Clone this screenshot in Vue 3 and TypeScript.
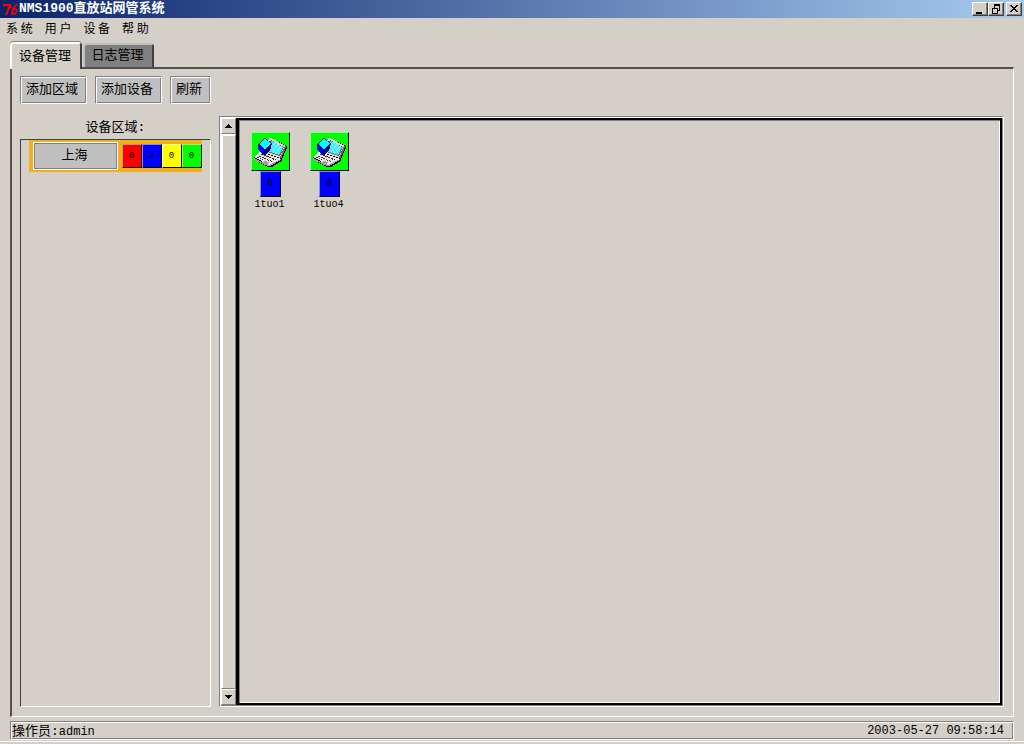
<script setup lang="ts">
import { ref } from 'vue'

interface Count { color: string; value: number }
interface Device { name: string; alarms: number }

const menus: string[] = ['系 统', '用 户', '设 备', '帮 助']
const tabs: string[] = ['设备管理', '日志管理']
const actions: string[] = ['添加区域', '添加设备', '刷新']
const activeTab = ref(0)
const counts: Count[] = [
  { color: 'red', value: 0 },
  { color: 'blue', value: 2 },
  { color: 'yellow', value: 0 },
  { color: 'green', value: 0 },
]
const devices: Device[] = [
  { name: '1tuo1', alarms: 0 },
  { name: '1tuo4', alarms: 0 },
]
</script>

<template>
  <div class="window">
    <header class="titlebar">
      <svg class="logo" width="16" height="16" viewBox="0 0 16 16" fill="none" stroke="#f00" stroke-width="2">
        <path d="M0 6V4H7L3 14" />
        <path d="M14 3L10 8L9 13H12L14 10L13 8H10M6 7L9 6" stroke-width="1.6" />
      </svg>
      <h1>NMS1900直放站网管系统</h1>
      <div class="controls">
        <button type="button" aria-label="最小化">
          <svg width="12" height="10" shape-rendering="crispEdges"><path d="M2 8h6v2h-6z" /></svg>
        </button>
        <button type="button" aria-label="还原">
          <svg width="12" height="10" shape-rendering="crispEdges" fill="none" stroke="#000">
            <path d="M4 .5h6M4 1.5h6M4.5 1v3M9.5 1v5.5H7M2 4h6M2.5 4v5.5h5V4M2 4.5h6" />
          </svg>
        </button>
        <button type="button" class="close" aria-label="关闭">
          <svg width="12" height="10" shape-rendering="crispEdges"><path d="M2 1h2v1h1v1h2V2h1V1h2v1H9v1H8v1H7v1h1v1h1v1h1v1H8V7H7V6H5v1H4v1H2V7h1V6h1V5h1V4H4V3H3V2H2z" /></svg>
        </button>
      </div>
    </header>

    <nav class="menu">
      <button v-for="m in menus" :key="m" type="button">{{ m }}</button>
    </nav>

    <div class="tabs" role="tablist">
      <button
        v-for="(t, i) in tabs"
        :key="t"
        type="button"
        role="tab"
        :aria-selected="activeTab === i"
        :class="{ active: activeTab === i }"
        @click="activeTab = i"
      >{{ t }}</button>
    </div>

    <main class="panel">
      <section class="side">
        <div class="toolbar">
          <button v-for="a in actions" :key="a" type="button">{{ a }}</button>
        </div>
        <h2>设备区域:</h2>
        <div class="regions">
          <div class="region">
            <button type="button" class="region-name">上海</button>
            <div class="counts">
              <button v-for="c in counts" :key="c.color" type="button" :class="['tile', c.color]">{{ c.value }}</button>
            </div>
          </div>
        </div>
      </section>

      <section class="view">
        <div class="scrollbar">
          <button type="button" aria-label="向上滚动">
            <svg width="7" height="4" shape-rendering="crispEdges"><path d="M3 0h1v1h1v1h1v1h1v1H0V3h1V2h1V1h1z" /></svg>
          </button>
          <div class="thumb"></div>
          <button type="button" aria-label="向下滚动">
            <svg width="7" height="4" shape-rendering="crispEdges"><path d="M0 0h7v1H6v1H5v1H4v1H3V3H2V2H1V1H0z" /></svg>
          </button>
        </div>
        <div class="canvas">
          <div v-for="d in devices" :key="d.name" class="device">
            <button type="button" class="tile green pic" :aria-label="d.name">
              <svg width="37" height="37" viewBox="1 1 37 37" shape-rendering="crispEdges">
                <path d="M18 6H20L36 14V16L31 27V29L21 35H17L3 28V25L9 19L15 21Z" fill="#000" />
                <path d="M18 6H20L35 14L30 26L14 21Z" fill="#d8d8d8" />
                <path d="M34 14L35 15L30 27L29 25Z" fill="#707070" />
                <path d="M20 8L33 15L29 24L16 20Z" fill="#707070" />
                <path d="M21 9L32 15L28 23L17 19Z" fill="#40f0ff" />
                <path d="M22 18L28 12M24 21L31 14M20 15L25 10" stroke="#d0e8e8" stroke-dasharray="2 1" />
                <path d="M3 25L9 20L30 27L18 33Z" fill="#e8e8e8" />
                <path d="M3 26L18 33L30 27V28L19 34H17L3 28Z" fill="#a0a0a0" />
                <path d="M10 22L25 28M8 24L22 30M6 25L12 28" stroke="#303030" stroke-dasharray="2 1" />
                <path d="M14 29L18 30L16 32L12 30Z" fill="#a0a0a0" />
                <path d="M7 12L14 6L21 11L19 19L14 23L7 18Z" fill="#000080" />
                <path d="M7 12L13 16V23L7 18Z" fill="#00f" />
                <path d="M8 12L14 7L20 11L14 17Z" fill="#0ff" />
              </svg>
            </button>
            <button type="button" class="tile blue alarm">{{ d.alarms }}</button>
            <span class="device-name">{{ d.name }}</span>
          </div>
        </div>
      </section>
    </main>

    <footer class="status">
      <span class="operator">操作员:<b>admin</b></span>
      <time datetime="2003-05-27T09:58:14">2003-05-27 09:58:14</time>
    </footer>
  </div>
</template>

<style>
body { background: #d4d0c8; }
</style>

<style scoped>
.window {
  display: flex;
  flex-direction: column;
  height: 100vh;
  box-sizing: border-box;
  padding-bottom: 2px;
  background: #d4d0c8;
  color: #000;
  font: 13px/16px "Liberation Mono", "Noto Sans CJK SC", monospace;
}
.window::after {
  content: "";
  flex: none;
  height: 1px;
  margin-top: 1px;
  background: #fff;
}
button {
  box-sizing: border-box;
  margin: 0;
  padding: 0;
  border: 0;
  background: none;
  color: inherit;
  font: inherit;
  white-space: nowrap;
}
h1, h2 { margin: 0; font-size: 13px; }
svg { display: block; flex: none; }

.titlebar {
  display: flex;
  align-items: center;
  flex: none;
  height: 18px;
  padding: 0 2px 0 3px;
  background: linear-gradient(90deg, #0a246a, #a6caf0);
  color: #fff;
}
.titlebar h1 { flex: 1; line-height: 18px; }
.controls { display: flex; }
.controls button {
  display: flex;
  align-items: center;
  justify-content: center;
  width: 16px;
  height: 14px;
  background: #d4d0c8;
  border: 1px solid;
  border-color: #fff #404040 #404040 #fff;
  box-shadow: inset -1px -1px #808080;
}
.controls .close { margin-left: 2px; }

.menu {
  display: flex;
  flex: none;
  gap: 12px;
  height: 20px;
  padding-left: 6px;
}
.menu button { font: 12px/20px "Noto Sans CJK SC", sans-serif; }

.tabs {
  display: flex;
  align-items: flex-end;
  flex: none;
  gap: 1px;
  height: 29px;
  margin: 0 10px;
}
.tabs button {
  width: 71px;
  height: 24px;
  padding-right: 2px;
  border: 2px solid #c0c0c0;
  border-right-color: #404040;
  border-bottom: 0;
  border-radius: 4px 4px 0 0;
  background: #808080;
}
.tabs .active {
  position: relative;
  width: 72px;
  height: 27px;
  margin-bottom: -2px;
  border-color: #fff #404040 #fff #fff;
  background: #d4d0c8;
  box-shadow: 0 -1px #808080;
}

.panel {
  display: flex;
  flex: 1;
  min-height: 0;
  gap: 8px;
  margin: 0 10px 4px;
  padding: 7px 9px 9px 8px;
  border: 2px solid;
  border-color: #505050 #fff #fff #505050;
  border-right-width: 1px;
  border-bottom-width: 1px;
}
.side { display: flex; flex-direction: column; flex: none; width: 191px; }
.toolbar { display: flex; justify-content: space-between; flex: none; }
.toolbar button {
  height: 28px;
  padding: 0 8px 0 5px;
  border: 1px solid;
  border-color: #808080 #fff #fff #808080;
  box-shadow: inset 1px 1px #fff, inset -1px -1px #808080;
  background: #c0c0c0;
  line-height: 24px;
}
h2 { margin: 16px 0 3px; font-weight: normal; line-height: 16px; text-align: center; }
.regions {
  flex: 1;
  padding: 0 8px;
  border: 1px solid;
  border-color: #404040 #fff #fff #404040;
}
.region {
  display: flex;
  align-items: center;
  justify-content: space-between;
  height: 32px;
  padding-left: 4px;
  background: #f0b020;
}
.region-name {
  width: 85px;
  height: 28px;
  padding-right: 2px;
  border: 1px solid #fff;
  box-shadow: inset 0 0 0 1px #808080;
  background: #c0c0c0;
}
.counts { display: flex; }
.tile {
  width: 20px;
  height: 24px;
  padding-right: 1px;
  border: 1px solid #000;
  font: 9px/20px "Liberation Mono", monospace;
}
.red { background: #f00; border-color: #f88 #000 #000 #f88; }
.blue { background: #00f; border-color: #88f #000 #000 #88f; }
.yellow { background: #ff0; border-color: #ffa #000 #000 #ffa; }
.green { background: #0f0; border-color: #8f8 #000 #000 #8f8; }

.view {
  display: flex;
  flex: 1;
  min-width: 0;
  margin-top: 40px;
  border: 1px solid;
  border-color: #808080 #fff #fff #808080;
  box-shadow: inset 1px 1px #fff, inset -1px -1px #808080;
  padding: 1px;
}
.scrollbar { display: flex; flex-direction: column; flex: none; width: 15px; }
.scrollbar button, .thumb {
  display: flex;
  align-items: center;
  justify-content: center;
  border: 1px solid;
  border-color: #fff #808080 #808080 #fff;
  background: #d4d0c8;
}
.scrollbar button { flex: none; height: 16px; }
.thumb { flex: 1; box-shadow: inset 1px 1px #fff; }
.canvas {
  display: flex;
  align-items: flex-start;
  flex: 1;
  gap: 12px;
  padding: 12px 8px;
  border: 2px solid #000;
  border-left-width: 3px;
  box-shadow: inset 1px 1px #808080, inset -1px -1px #fff;
}
.device { display: flex; flex-direction: column; align-items: center; width: 47px; }
.pic { width: 39px; height: 39px; padding: 0; }
.alarm { width: 21px; height: 26px; font-size: 10px; }
.device-name { padding-right: 2px; font-size: 10px; line-height: 16px; }

.status {
  display: flex;
  justify-content: space-between;
  flex: none;
  height: 17px;
  margin: 0 10px;
  padding: 0 9px 0 1px;
  border: 1px solid;
  border-color: #808080 #fff #fff #808080;
  box-shadow: inset 1px 1px #fff, inset -1px -1px #808080;
  font-size: 12px;
  line-height: 19px;
}
.operator { font-size: 13px; }
.operator b { font-size: 12px; font-weight: normal; }
</style>
